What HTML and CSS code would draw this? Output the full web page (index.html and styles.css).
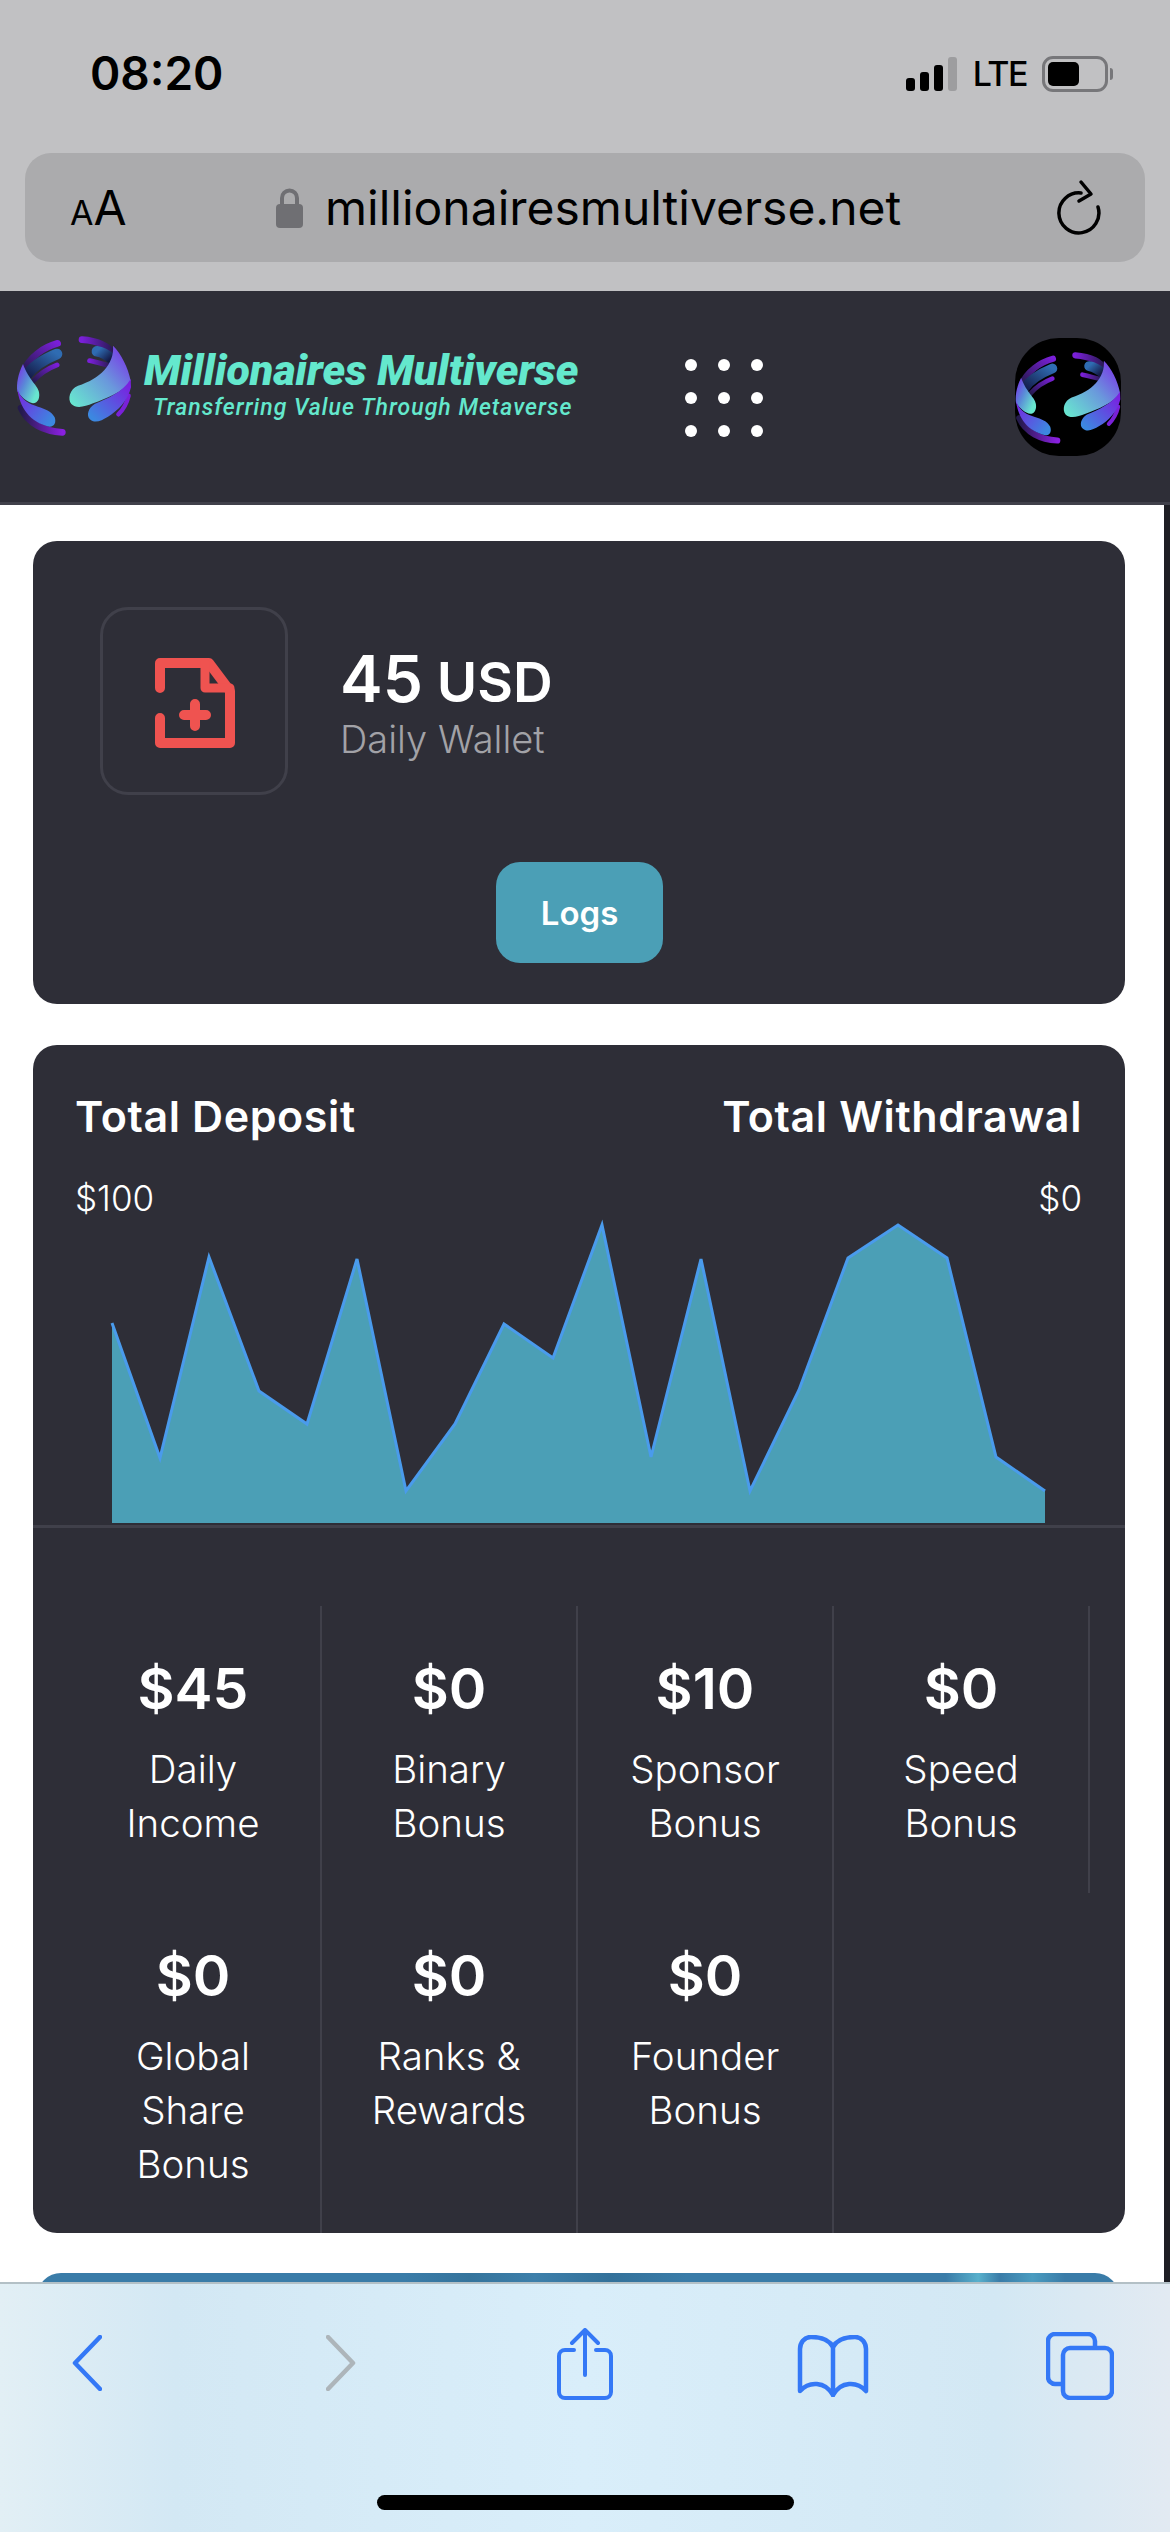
FILE: index.html
```html
<!DOCTYPE html>
<html>

<head>
    <link rel="stylesheet" href="styles.css">
    <title>Millionaires Multiverse</title>
</head>

<body>
    <svg class="defs" width="0" height="0">
        <defs>
            <linearGradient id="g_strand" x1="1" y1="0" x2="0" y2="1">
                <stop offset="0" stop-color="#7a1fd8" />
                <stop offset="1" stop-color="#241a4c" />
            </linearGradient>
            <linearGradient id="g_strand_b" x1="0" y1="0" x2="1" y2="0">
                <stop offset="0" stop-color="#7a1fd8" />
                <stop offset="1" stop-color="#241a4c" />
            </linearGradient>
            <linearGradient id="g_bottom" x1="0" y1="0" x2="1" y2="0">
                <stop offset="0" stop-color="#241a4c" />
                <stop offset="1" stop-color="#8a20e0" />
            </linearGradient>
            <linearGradient id="g_blue_l" x1="1" y1="0" x2="0" y2="1">
                <stop offset="0" stop-color="#2f6cb2" />
                <stop offset="1" stop-color="#141a48" />
            </linearGradient>
            <linearGradient id="g_blue_r" x1="0" y1="0" x2="1" y2="0.6">
                <stop offset="0" stop-color="#2f6cb2" />
                <stop offset="1" stop-color="#141a48" />
            </linearGradient>
            <linearGradient id="g_left" x1="0" y1="0.1" x2="1" y2="0.9">
                <stop offset="0" stop-color="#7a30e8" />
                <stop offset="0.4" stop-color="#5a88d8" />
                <stop offset="0.85" stop-color="#68e6cf" />
            </linearGradient>
            <linearGradient id="g_lower_l" x1="0" y1="0" x2="1" y2="0.7">
                <stop offset="0" stop-color="#7a20e0" />
                <stop offset="1" stop-color="#3c88e0" />
            </linearGradient>
            <linearGradient id="g_right" x1="0" y1="1" x2="1" y2="0.1">
                <stop offset="0.05" stop-color="#68e6cf" />
                <stop offset="0.55" stop-color="#6a98dc" />
                <stop offset="1" stop-color="#7a30e8" />
            </linearGradient>
            <linearGradient id="g_lower_r" x1="0" y1="1" x2="1" y2="0">
                <stop offset="0.1" stop-color="#3c88e0" />
                <stop offset="0.9" stop-color="#7a20e0" />
            </linearGradient>
            <symbol id="globe" viewBox="50 40 346 306">
                <g fill="none" stroke-linecap="round">
                    <path d="M174 68C130 80 90 110 72 150" stroke="url(#g_strand)" stroke-width="20" />
                    <path d="M172 100C140 113 100 135 80 165" stroke="url(#g_blue_l)" stroke-width="32" />
                    <path d="M172 133C140 145 115 165 100 182" stroke="url(#g_strand)" stroke-width="15" />
                    <path d="M247 57C290 60 330 75 345 105" stroke="url(#g_strand_b)" stroke-width="20" />
                    <path d="M292 92C310 95 325 105 340 118" stroke="url(#g_blue_r)" stroke-width="32" />
                    <path d="M270 120C295 125 315 132 335 136" stroke="url(#g_strand_b)" stroke-width="15" />
                    <path d="M64 262C85 310 135 332 188 335" stroke="url(#g_bottom)" stroke-width="20" />
                    <path d="M356 281C372 266 382 245 387 225" stroke="#7a20d8" stroke-width="13" />
                </g>
                <path d="M70 130C55 160 50 190 53 212C70 235 85 245 100 248C116 248 121 230 118 215C116 195 88 180 70 130Z" fill="url(#g_left)" />
                <path d="M53 205C60 260 90 305 150 318C165 318 170 305 165 290C155 270 135 265 115 258C90 250 65 240 53 205Z" fill="url(#g_lower_l)" />
                <path d="M340 75C345 130 300 175 235 195C210 205 203 235 215 250C230 265 255 258 280 248C320 232 370 215 393 180C385 140 365 100 340 75Z" fill="url(#g_right)" />
                <path d="M393 175C370 215 320 235 285 250C265 262 260 285 270 295C285 310 305 300 325 288C355 270 385 240 394 200Z" fill="url(#g_lower_r)" />
            </symbol>
        </defs>
    </svg>

    <div class="browser_top">
        <div class="status_bar">
            <span class="clock">08:20</span>
            <div class="status_icons">
                <div class="signal">
                    <i class="bar bar1"></i><i class="bar bar2"></i><i class="bar bar3"></i><i class="bar bar4"></i>
                </div>
                <span class="lte">LTE</span>
                <div class="battery"><div class="battery_fill"></div></div>
                <div class="battery_cap"></div>
            </div>
        </div>
        <div class="url_bar">
            <span class="aa"><small>A</small>A</span>
            <div class="url_center">
                <svg class="lock" viewBox="0 0 27 40" width="27" height="40">
                    <path d="M6 18V10a7.500 7.500 0 0 1 15 0v8" fill="none" stroke="#6f6f73" stroke-width="4" />
                    <rect x="0" y="16" width="27" height="24" rx="4" fill="#6f6f73" />
                </svg>
                <span class="url_text">millionairesmultiverse.net</span>
            </div>
            <svg class="reload" viewBox="0 0 46 56" width="46" height="56" fill="none" stroke="#000" stroke-width="3.500" stroke-linecap="round" stroke-linejoin="round">
                <path d="M24 14A20 20 0 1 0 41 28" />
                <path d="M24 3L34 15L22 22" />
            </svg>
        </div>
    </div>

    <div class="site_header">
        <div class="brand">
            <svg class="brand_logo" width="116" height="102"><use href="#globe" /></svg>
            <div class="brand_text">
                <div class="brand_name">Millionaires Multiverse</div>
                <div class="brand_tag">Transferring Value Through Metaverse</div>
            </div>
        </div>
        <div class="dots">
            <i></i><i></i><i></i><i></i><i></i><i></i><i></i><i></i><i></i>
        </div>
        <div class="avatar"><svg width="106" height="94"><use href="#globe" /></svg></div>
    </div>

    <div class="content">
        <div class="card wallet_card">
            <div class="wallet_row">
                <div class="wallet_icon">
                    <svg viewBox="0 0 80 90" width="80" height="90" fill="none" stroke="#ef5350" stroke-width="10" stroke-linecap="round" stroke-linejoin="round">
                        <path d="M5 30V5H54L75 33V85H5V60" />
                        <path d="M50 5V30H75" stroke-width="9" />
                        <path d="M40 46V68M29 57H51" stroke-width="10" />
                    </svg>
                </div>
                <div class="wallet_info">
                    <div class="wallet_amount"><span class="wallet_num">45</span> USD</div>
                    <div class="wallet_label">Daily Wallet</div>
                </div>
            </div>
            <div class="wallet_actions">
                <button class="logs_button">Logs</button>
            </div>
        </div>

        <div class="card stats_card">
            <div class="totals">
                <div class="totals_row totals_titles">
                    <span>Total Deposit</span>
                    <span>Total Withdrawal</span>
                </div>
                <div class="totals_row totals_values">
                    <span>$100</span>
                    <span>$0</span>
                </div>
            </div>

            <svg class="chart" viewBox="33 1215 1092 310" width="1092" height="310">
                <polygon fill="#4b9fb6" points="112,1323 160,1458 209,1257 259,1391 307,1424 357,1259 406,1491 455,1424 504,1324 553,1358 602,1225 651,1457 701,1259 750,1491 799,1390 848,1258 898,1225 947,1258 996,1457 1045,1491 1045,1523 112,1523" />
                <polyline fill="none" stroke="#4a9bec" stroke-width="3" points="112,1323 160,1458 209,1257 259,1391 307,1424 357,1259 406,1491 455,1424 504,1324 553,1358 602,1225 651,1457 701,1259 750,1491 799,1390 848,1258 898,1225 947,1258 996,1457 1045,1491" />
            </svg>

            <div class="bonus_grid">
                <div class="bonus bonus_top"><div class="bonus_value">$45</div><div class="bonus_label">Daily<br>Income</div></div>
                <div class="bonus bonus_top"><div class="bonus_value">$0</div><div class="bonus_label">Binary<br>Bonus</div></div>
                <div class="bonus bonus_top"><div class="bonus_value">$10</div><div class="bonus_label">Sponsor<br>Bonus</div></div>
                <div class="bonus bonus_top"><div class="bonus_value">$0</div><div class="bonus_label">Speed<br>Bonus</div></div>
                <div class="bonus"><div class="bonus_value">$0</div><div class="bonus_label">Global<br>Share<br>Bonus</div></div>
                <div class="bonus"><div class="bonus_value">$0</div><div class="bonus_label">Ranks &amp;<br>Rewards</div></div>
                <div class="bonus"><div class="bonus_value">$0</div><div class="bonus_label">Founder<br>Bonus</div></div>
            </div>
        </div>

        <div class="banner"></div>
    </div>

    <div class="toolbar">
        <div class="toolbar_icons">
            <svg class="tool_back" viewBox="0 0 30 56" width="30" height="56" fill="none" stroke="#3478f6" stroke-width="4.500" stroke-linecap="round" stroke-linejoin="round"><path d="M28 2L3 28l25 26" /></svg>
            <svg class="tool_fwd" viewBox="0 0 30 56" width="30" height="56" fill="none" stroke="#adb5ba" stroke-width="4.500" stroke-linecap="round" stroke-linejoin="round"><path d="M2 2l25 26L2 54" /></svg>
            <svg class="tool_share" viewBox="0 0 56 72" width="56" height="72" fill="none" stroke="#3478f6" stroke-width="4" stroke-linecap="round" stroke-linejoin="round">
                <path d="M17 22H8a6 6 0 0 0-6 6v36a6 6 0 0 0 6 6h40a6 6 0 0 0 6-6V28a6 6 0 0 0-6-6h-9" />
                <path d="M28 47V2M15 15L28 2l13 13" />
            </svg>
            <svg class="tool_book" viewBox="0 0 72 62" width="72" height="62" fill="none" stroke="#3478f6" stroke-width="4.500" stroke-linecap="round" stroke-linejoin="round">
                <path d="M36 12C32 4 24 2 14 2C7 2 3 8 3 14V56C12 46 28 46 36 60C44 46 60 46 69 56V14C69 8 65 2 58 2C48 2 40 4 36 12Z" />
                <path d="M36 12V60" />
            </svg>
            <svg class="tool_tabs" viewBox="0 0 68 68" width="68" height="68" fill="none" stroke="#3478f6" stroke-width="4.500" stroke-linejoin="round">
                <path d="M16 52H9a7 7 0 0 1-7-7V9a7 7 0 0 1 7-7h33a7 7 0 0 1 7 7v6" />
                <rect x="17" y="16" width="49" height="50" rx="7" />
            </svg>
        </div>
        <div class="home_indicator"></div>
    </div>
</body>

</html>
```

FILE: styles.css
```css
* {
    box-sizing: border-box;
}

html,
body {
    margin: 0;
    height: 2532px;
    overflow: hidden;
}

body {
    display: flex;
    flex-direction: column;
    background: #ffffff;
    font-family: "Inter", "Open Sans", sans-serif;
    color: #ffffff;
}

.defs {
    display: block;
    height: 0;
}

/* browser top */

.browser_top {
    height: 291px;
    flex: none;
    background: #c1c1c3;
    color: #000000;
    padding: 0 25px;
}

.status_bar {
    height: 153px;
    display: flex;
    justify-content: space-between;
    padding: 48px 32px 0 65px;
}

.clock {
    font-size: 46px;
    font-weight: 600;
    line-height: 50px;
}

.status_icons {
    display: flex;
    align-items: flex-start;
    padding-top: 8px;
}

.signal {
    display: flex;
    align-items: flex-end;
    gap: 5px;
    height: 34px;
    margin: 1px 16px 0 0;
}

.bar {
    width: 9px;
    border-radius: 3px;
    background: #000000;
}

.bar1 { height: 13px; }
.bar2 { height: 19px; }
.bar3 { height: 26px; }
.bar4 { height: 34px; background: #9d9d9f; }

.lte {
    font-size: 34px;
    font-weight: 500;
    line-height: 36px;
    margin-right: 15px;
    letter-spacing: -1.5px;
}

.battery {
    width: 66px;
    height: 36px;
    border: 3px solid #77777a;
    border-radius: 11px;
    padding: 3px;
}

.battery_fill {
    width: 31px;
    height: 24px;
    border-radius: 5px;
    background: #000000;
}

.battery_cap {
    width: 3px;
    height: 12px;
    margin: 12px 0 0 2px;
    border-radius: 0 3px 3px 0;
    background: #77777a;
}

.url_bar {
    height: 109px;
    display: flex;
    align-items: center;
    padding: 0 42px 0 45px;
    border-radius: 26px;
    background: #ababad;
}

.aa {
    font-size: 48px;
    width: 62px;
    line-height: 44px;
    padding-top: 6px;
}

.aa small {
    font-size: 34px;
}

.url_center {
    flex: 1;
    display: flex;
    align-items: center;
    gap: 22px;
    padding-left: 144px;
}

.url_text {
    font-size: 48px;
    line-height: 60px;
}

.reload {
    flex: none;
    margin-top: -2px;
}

/* site header */

.site_header {
    height: 214px;
    flex: none;
    display: flex;
    align-items: flex-start;
    background: #2e2e37;
    border-bottom: 3px solid #40404a;
    padding: 43px 49px 0 16px;
}

.brand {
    display: flex;
    align-items: flex-start;
    width: 669px;
    flex: none;
}

.brand_logo {
    flex: none;
}

.brand_text {
    color: #64e8cd;
    font-family: "Roboto", sans-serif;
    font-style: italic;
    padding: 13px 0 0 12px;
}

.brand_name {
    font-size: 43px;
    font-weight: 900;
    line-height: 46px;
    white-space: nowrap;
}

.brand_tag {
    margin-top: 3px;
    font-size: 23px;
    font-weight: 500;
    line-height: 24px;
    letter-spacing: 1px;
    padding-left: 9px;
    white-space: nowrap;
}

.dots {
    display: grid;
    grid-template-columns: repeat(3, 12px);
    grid-auto-rows: 12px;
    gap: 21px;
    margin-top: 25px;
}

.dots i {
    border-radius: 50%;
    background: #ffffff;
}

.avatar {
    width: 106px;
    height: 118px;
    margin: 4px 0 0 auto;
    display: flex;
    align-items: center;
    border-radius: 44px;
    background: #000000;
}

/* content */

.content {
    flex: 1;
    min-height: 0;
    overflow: hidden;
    padding: 36px 39px 0 33px;
    border-right: 6px solid #1e1e24;
}

.card {
    border-radius: 24px;
    background: #2e2e37;
}

.wallet_card {
    height: 463px;
    padding: 66px 66px 0 67px;
}

.wallet_row {
    display: flex;
    align-items: flex-start;
}

.wallet_icon {
    width: 188px;
    height: 188px;
    display: flex;
    align-items: center;
    justify-content: center;
    flex: none;
    border: 3px solid #40404a;
    border-radius: 28px;
}

.wallet_icon svg {
    margin: 3px 0 0 2px;
}

.wallet_info {
    padding: 39px 0 0 52px;
}

.wallet_amount {
    font-size: 55px;
    font-weight: 600;
    line-height: 66px;
}

.wallet_num {
    font-size: 64px;
}

.wallet_label {
    margin-top: 2px;
    font-size: 38px;
    font-weight: 300;
    line-height: 44px;
    color: #a2a2a7;
}

.wallet_actions {
    display: flex;
    justify-content: center;
    padding-top: 67px;
}

.logs_button {
    width: 167px;
    height: 101px;
    border: none;
    border-radius: 24px;
    background: #4b9fb6;
    color: #ffffff;
    font-family: "Inter", sans-serif;
    font-size: 33px;
    font-weight: 600;
}

.stats_card {
    height: 1188px;
    margin-top: 41px;
}

.totals {
    padding: 46px 43px 0 42px;
}

.totals_row {
    display: flex;
    justify-content: space-between;
}

.totals_titles {
    font-size: 43px;
    font-weight: 600;
    line-height: 50px;
    letter-spacing: 0.6px;
}

.totals_values {
    font-size: 35px;
    font-weight: 300;
    line-height: 44px;
    margin-top: 35px;
}

.chart {
    display: block;
    margin-top: -5px;
    border-bottom: 3px solid #40404a;
    height: 313px;
}

.bonus_grid {
    display: grid;
    grid-template-columns: repeat(4, 256px);
    margin: 78px 0 0 33px;
}

.bonus {
    height: 340px;
    padding-top: 50px;
    text-align: center;
    border-right: 2px solid #40404a;
}

.bonus_top {
    height: 287px;
}

.bonus_value {
    font-size: 57px;
    font-weight: 600;
    line-height: 66px;
}

.bonus_label {
    margin-top: 20px;
    font-size: 38.500px;
    font-weight: 300;
    line-height: 54px;
}

.banner {
    height: 120px;
    margin: 40px 6px 0 4px;
    border-radius: 24px 24px 0 0;
    background: linear-gradient(90deg, #3a7ca8 0%, #3a7ca8 34%, #35749c 40%, #3d7faa 46%, #33719a 53%, #3a7ca8 60%, #3a7ca8 84%, #58b0cc 87%, #3a7ca8 89%, #4a9cc0 92%, #3a7ca8 95%);
}

/* browser bottom */

.toolbar {
    height: 250px;
    flex: none;
    border-top: 2px solid #b3c0c6;
    background: linear-gradient(90deg, #e2eff5 0%, #d3e8f4 15%, #d9eefa 50%, #d3e8f4 85%, #e2eaf2 100%);
}

.toolbar_icons {
    position: relative;
    height: 211px;
}

.toolbar_icons svg {
    position: absolute;
}

.tool_back { left: 72px; top: 51px; }
.tool_fwd { left: 326px; top: 51px; }
.tool_share { left: 557px; top: 44px; }
.tool_book { left: 797px; top: 51px; }
.tool_tabs { left: 1046px; top: 48px; }

.home_indicator {
    width: 417px;
    height: 15px;
    margin: 0 auto;
    border-radius: 8px;
    background: #000000;
}
```
